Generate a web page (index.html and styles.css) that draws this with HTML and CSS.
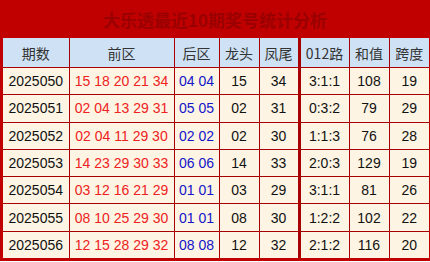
FILE: index.html
```html
<!DOCTYPE html>
<html lang="zh">
<head>
<meta charset="utf-8">
<link rel="stylesheet" href="styles.css">
</head>
<body>
<div class="panel">
  <div class="title">大乐透最近10期奖号统计分析</div>
  <table class="stats">
    <colgroup>
      <col class="c-qi"><col class="c-front"><col class="c-back"><col class="c-n"><col class="c-n sep"><col class="c-road"><col class="c-n"><col class="c-n">
    </colgroup>
    <thead>
      <tr><th>期数</th><th>前区</th><th>后区</th><th>龙头</th><th class="sep">凤尾</th><th>012路</th><th>和值</th><th>跨度</th></tr>
    </thead>
    <tbody>
      <tr><td>2025050</td><td class="red">15 18 20 21 34</td><td class="blue">04 04</td><td>15</td><td class="sep">34</td><td>3:1:1</td><td>108</td><td>19</td></tr>
      <tr><td>2025051</td><td class="red">02 04 13 29 31</td><td class="blue">05 05</td><td>02</td><td class="sep">31</td><td>0:3:2</td><td>79</td><td>29</td></tr>
      <tr><td>2025052</td><td class="red">02 04 11 29 30</td><td class="blue">02 02</td><td>02</td><td class="sep">30</td><td>1:1:3</td><td>76</td><td>28</td></tr>
      <tr><td>2025053</td><td class="red">14 23 29 30 33</td><td class="blue">06 06</td><td>14</td><td class="sep">33</td><td>2:0:3</td><td>129</td><td>19</td></tr>
      <tr><td>2025054</td><td class="red">03 12 16 21 29</td><td class="blue">01 01</td><td>03</td><td class="sep">29</td><td>3:1:1</td><td>81</td><td>26</td></tr>
      <tr><td>2025055</td><td class="red">08 10 25 29 30</td><td class="blue">01 01</td><td>08</td><td class="sep">30</td><td>1:2:2</td><td>102</td><td>22</td></tr>
      <tr><td>2025056</td><td class="red">12 15 28 29 32</td><td class="blue">08 08</td><td>12</td><td class="sep">32</td><td>2:1:2</td><td>116</td><td>20</td></tr>
    </tbody>
  </table>
</div>
</body>
</html>
```
FILE: styles.css
```css
html, body {
  margin: 0;
  padding: 0;
  background: #ffffff;
}
.panel {
  width: 430px;
  box-sizing: border-box;
  background: #c00000;
  border: 3px solid #c00000;
  border-top: 0;
  font-family: "Liberation Sans", "Noto Sans CJK SC", sans-serif;
}
.title {
  height: 38px;
  line-height: 40px;
  text-align: center;
  font-size: 17px;
  font-weight: bold;
  color: #9a0000;
  font-family: "Noto Sans CJK SC", sans-serif;
}
.stats {
  width: 424px;
  table-layout: fixed;
  border-collapse: collapse;
}
.c-qi { width: 66px; }
.c-front { width: 105px; }
.c-back { width: 45px; }
.c-n { width: 40px; }
.c-road { width: 50px; }
.stats th, .stats td {
  border: 1px solid #a80000;
  text-align: center;
  padding: 0;
  white-space: nowrap;
  overflow: hidden;
}
.stats th {
  height: 29px;
  background: #cfe2f5;
  color: #333333;
  font-weight: normal;
  font-size: 14px;
  font-family: "Noto Sans CJK SC", sans-serif;
}
.stats td {
  height: 26.3px;
  background: #fdf4e3;
  color: #111111;
  font-size: 14px;
}
.stats .sep {
  border-right: 3px solid #a80000;
}
.stats td.red { color: #ee2222; }
.stats td.blue { color: #1414c8; }
.stats tr:first-child th { border-top: 0; }
.stats th:first-child, .stats td:first-child { border-left: 0; }
.stats th:last-child, .stats td:last-child { border-right: 0; }
.stats tbody tr:last-child td { border-bottom: 0; }
```
